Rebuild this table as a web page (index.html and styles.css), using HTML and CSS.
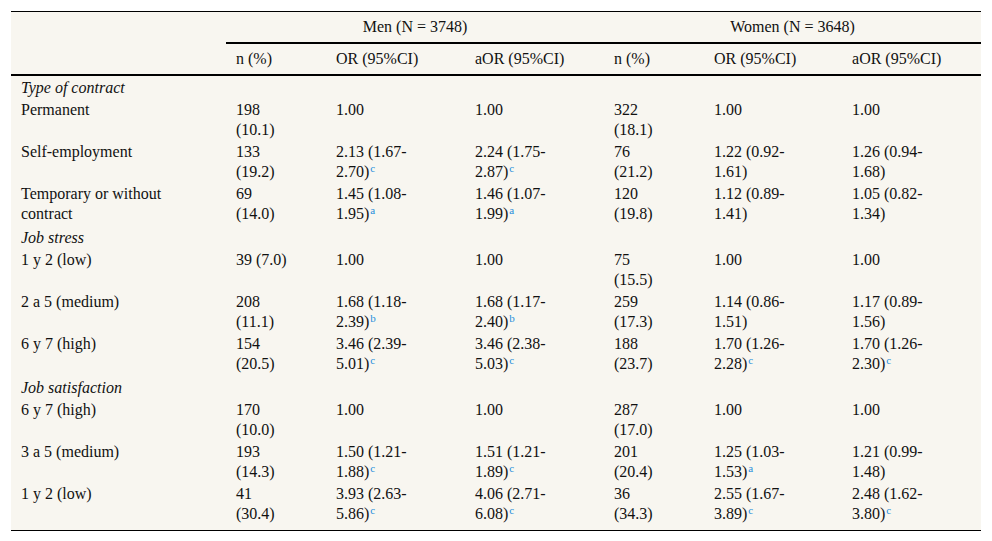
FILE: index.html
```html
<!DOCTYPE html>
<html lang="en">
<head>
<meta charset="utf-8">
<title>Table</title>
<link rel="stylesheet" href="styles.css">
</head>
<body>
<div class="page">
<table class="data">
  <colgroup>
    <col class="c-label"><col class="c-n"><col class="c-or"><col class="c-or"><col class="c-n"><col class="c-or2"><col class="c-or">
  </colgroup>
  <thead>
    <tr class="h1">
      <th></th>
      <th colspan="3" class="grp">Men (N = 3748)</th>
      <th colspan="3" class="grp">Women (N = 3648)</th>
    </tr>
    <tr class="h2">
      <th class="blank"></th>
      <th>n (%)</th><th>OR (95%CI)</th><th>aOR (95%CI)</th>
      <th>n (%)</th><th>OR (95%CI)</th><th>aOR (95%CI)</th>
    </tr>
  </thead>
  <tbody>
    <tr class="sec first"><td colspan="7">Type of contract</td></tr>
    <tr><td>Permanent</td><td>198 (10.1)</td><td>1.00</td><td>1.00</td><td>322 (18.1)</td><td>1.00</td><td>1.00</td></tr>
    <tr><td>Self-employment</td><td>133 (19.2)</td><td>2.13 (1.67-&#8203;2.70)<sup>c</sup></td><td>2.24 (1.75-&#8203;2.87)<sup>c</sup></td><td>76 (21.2)</td><td>1.22 (0.92-&#8203;1.61)</td><td>1.26 (0.94-&#8203;1.68)</td></tr>
    <tr><td>Temporary or without contract</td><td>69 (14.0)</td><td>1.45 (1.08-&#8203;1.95)<sup>a</sup></td><td>1.46 (1.07-&#8203;1.99)<sup>a</sup></td><td>120 (19.8)</td><td>1.12 (0.89-&#8203;1.41)</td><td>1.05 (0.82-&#8203;1.34)</td></tr>
    <tr class="sec"><td colspan="7">Job stress</td></tr>
    <tr><td>1 y 2 (low)</td><td>39 (7.0)</td><td>1.00</td><td>1.00</td><td>75 (15.5)</td><td>1.00</td><td>1.00</td></tr>
    <tr><td>2 a 5 (medium)</td><td>208 (11.1)</td><td>1.68 (1.18-&#8203;2.39)<sup>b</sup></td><td>1.68 (1.17-&#8203;2.40)<sup>b</sup></td><td>259 (17.3)</td><td>1.14 (0.86-&#8203;1.51)</td><td>1.17 (0.89-&#8203;1.56)</td></tr>
    <tr><td>6 y 7 (high)</td><td>154 (20.5)</td><td>3.46 (2.39-&#8203;5.01)<sup>c</sup></td><td>3.46 (2.38-&#8203;5.03)<sup>c</sup></td><td>188 (23.7)</td><td>1.70 (1.26-&#8203;2.28)<sup>c</sup></td><td>1.70 (1.26-&#8203;2.30)<sup>c</sup></td></tr>
    <tr class="sec"><td colspan="7">Job satisfaction</td></tr>
    <tr><td>6 y 7 (high)</td><td>170 (10.0)</td><td>1.00</td><td>1.00</td><td>287 (17.0)</td><td>1.00</td><td>1.00</td></tr>
    <tr><td>3 a 5 (medium)</td><td>193 (14.3)</td><td>1.50 (1.21-&#8203;1.88)<sup>c</sup></td><td>1.51 (1.21-&#8203;1.89)<sup>c</sup></td><td>201 (20.4)</td><td>1.25 (1.03-&#8203;1.53)<sup>a</sup></td><td>1.21 (0.99-&#8203;1.48)</td></tr>
    <tr class="last"><td>1 y 2 (low)</td><td>41 (30.4)</td><td>3.93 (2.63-&#8203;5.86)<sup>c</sup></td><td>4.06 (2.71-&#8203;6.08)<sup>c</sup></td><td>36 (34.3)</td><td>2.55 (1.67-&#8203;3.89)<sup>c</sup></td><td>2.48 (1.62-&#8203;3.80)<sup>c</sup></td></tr>
  </tbody>
</table>
</div>
</body>
</html>
```
FILE: styles.css
```css
html, body {
  margin: 0;
  padding: 0;
  background: #ffffff;
}

.page {
  padding: 11px 11px 0 11px;
}

.data {
  width: 970px;
  table-layout: fixed;
  border-collapse: collapse;
  background: #f8f6f0;
  font-family: "Liberation Serif", "Times New Roman", serif;
  font-size: 16px;
  line-height: 20px;
  color: #111111;
  border-top: 1px solid #000000;
  border-bottom: 1px solid #000000;
}

.c-label { width: 215px; }
.c-n { width: 100px; }
.c-or { width: 139px; }
.c-or2 { width: 138px; }

.data th,
.data td {
  text-align: left;
  vertical-align: top;
  font-weight: normal;
  padding: 1px 39px 1px 10px;
  overflow-wrap: normal;
}

.data td:first-child {
  padding-right: 50px;
}

.data td:nth-child(2),
.data td:nth-child(5) {
  padding-right: 35px;
}

.data thead th {
  padding-top: 5px;
  padding-bottom: 5px;
  padding-right: 10px;
  white-space: nowrap;
}

.data thead .grp {
  text-align: center;
  border-bottom: 2px solid #000000;
  padding-left: 0;
  padding-right: 0;
}

.data thead .h2 th {
  border-bottom: 2px solid #000000;
}

.data .sec td {
  font-style: italic;
  padding-top: 3px;
}

.data .sec.first td {
  padding-top: 2px;
}

.data .last td {
  padding-bottom: 6px;
}

.data sup {
  font-size: 11px;
  line-height: 0;
  vertical-align: 5px;
  margin-left: 1px;
  color: #1f8fdc;
}
```
